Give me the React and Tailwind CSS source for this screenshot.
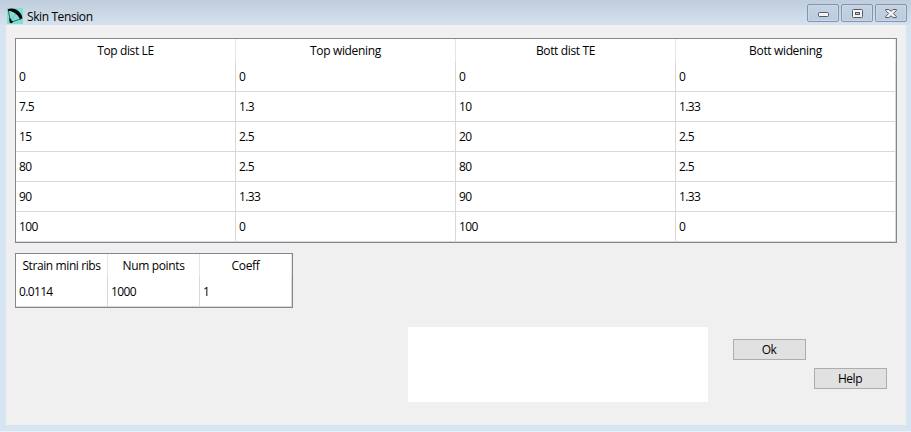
const mainRows = [
  ["0", "0", "0", "0"],
  ["7.5", "1.3", "10", "1.33"],
  ["15", "2.5", "20", "2.5"],
  ["80", "2.5", "80", "2.5"],
  ["90", "1.33", "90", "1.33"],
  ["100", "0", "100", "0"],
];

function Table({ heads, rows, cols }) {
  return (
    <div className="w-fit border border-[#828790] bg-white">
      <div className={`grid h-[23px] ${cols}`}>
        {heads.map((h) => (
          <div key={h} className="border-r border-[#e5e5e5] pt-[4px] text-center leading-4 first:tracking-[-0.4px]">
            {h}
          </div>
        ))}
      </div>
      {rows.map((row, i) => (
        <div key={i} className={`grid h-[30px] ${cols}`}>
          {row.map((v, j) => (
            <div key={j} className="border-r border-b border-[#d8d8d8] pt-[7px] pl-[3px] leading-4 tracking-[-0.65px]">
              {v}
            </div>
          ))}
        </div>
      ))}
    </div>
  );
}

function CaptionButton({ label, children }) {
  return (
    <button
      aria-label={label}
      className="flex h-[18px] w-8 items-center justify-center rounded-[2px] border border-[#8494b0] bg-linear-to-b from-[#c5d3e3] to-[#bccbdc] shadow-[inset_0_0_0_1px_#cbd8e7]"
    >
      {children}
    </button>
  );
}

function PushButton({ children, className }) {
  return (
    <button className={`h-[21px] w-[73px] border border-[#adadad] bg-[#e1e1e1] pr-px leading-4 tracking-[-0.5px] ${className}`}>
      {children}
    </button>
  );
}

export default function App() {
  return (
    <div className="h-[432px] w-[911px] overflow-hidden border-b border-[#e9f0f7] bg-[#d7e4f2] font-['Open_Sans','Noto_Sans',sans-serif] text-[12px] tracking-[-0.35px] text-black">
      <header className="flex h-[25px] bg-linear-to-b from-[#bfcddc] to-[#d5e1ee] pl-[7px]">
        <svg className="mt-2 h-4 w-4" viewBox="0 0 16 16">
          <rect width="16" height="16" fill="#82ded5" />
          <path d="M.8 1.2C4-.3 8 .4 11 2.8C13.8 5 15.3 7.6 15.4 10.6L13 11.2C11.8 8.6 10.3 6.8 8 5.2C5.8 3.6 3.6 3 1 3Z" fill="#000" />
          <path d="M1.3 2.5L3.2 12M4.5 14L14.2 10.8" stroke="#15463f" strokeWidth=".8" fill="none" />
          <path d="M3.8 12.5L9 6" stroke="#4fa59c" strokeWidth=".5" fill="none" />
          <path d="M2.3 10.3L3.8 10.8L4.2 12.3L6.2 13.4L4.8 15.3L2.6 14.6Z" fill="#000" />
        </svg>
        <h1 className="mt-[9px] ml-1 text-[12px] leading-4 tracking-[-0.4px]">Skin Tension</h1>
        <div className="mt-1 mr-1 ml-auto flex gap-[2px]">
          <CaptionButton label="Minimize">
            <svg className="mt-[3px] h-[5px] w-[11px]" viewBox="0 0 11 5">
              <rect x=".5" y=".5" width="10" height="4" rx="1" fill="#f5f5f5" stroke="#555866" />
            </svg>
          </CaptionButton>
          <CaptionButton label="Maximize">
            <svg className="h-[9px] w-[11px]" viewBox="0 0 11 9">
              <rect x=".5" y=".5" width="10" height="8" rx="1" fill="#f5f5f5" stroke="#555866" />
              <rect x="3.5" y="3.5" width="4" height="2" fill="#bccbdc" stroke="#555866" />
            </svg>
          </CaptionButton>
          <CaptionButton label="Close">
            <svg className="mr-px h-[9px] w-3" viewBox="0 0 12 9">
              <path d="M.7.5H3.8L6 2.2L8.2.5H11.3V1.5L8.3 4.5L11.3 7.5V8.5H8.2L6 6.8L3.8 8.5H.7V7.5L3.7 4.5L.7 1.5Z" fill="#f5f5f5" stroke="#555866" />
            </svg>
          </CaptionButton>
        </div>
      </header>
      <main className="ml-[6px] h-[400px] w-[900px] bg-[#f0f0f0] pt-[13px] pl-[9px]">
        <Table
          heads={["Top dist LE", "Top widening", "Bott dist TE", "Bott widening"]}
          rows={mainRows}
          cols="grid-cols-[repeat(4,220px)]"
        />
        <div className="mt-[10px]">
          <Table
            heads={["Strain mini ribs", "Num points", "Coeff"]}
            rows={[["0.0114", "1000", "1"]]}
            cols="grid-cols-[repeat(3,92px)]"
          />
        </div>
        <div className="mt-[19px] ml-[393px] flex">
          <div className="h-[75px] w-[300px] bg-white" />
          <PushButton className="mt-3 ml-[25px]">Ok</PushButton>
          <PushButton className="mt-[41px] ml-2">Help</PushButton>
        </div>
      </main>
    </div>
  );
}
